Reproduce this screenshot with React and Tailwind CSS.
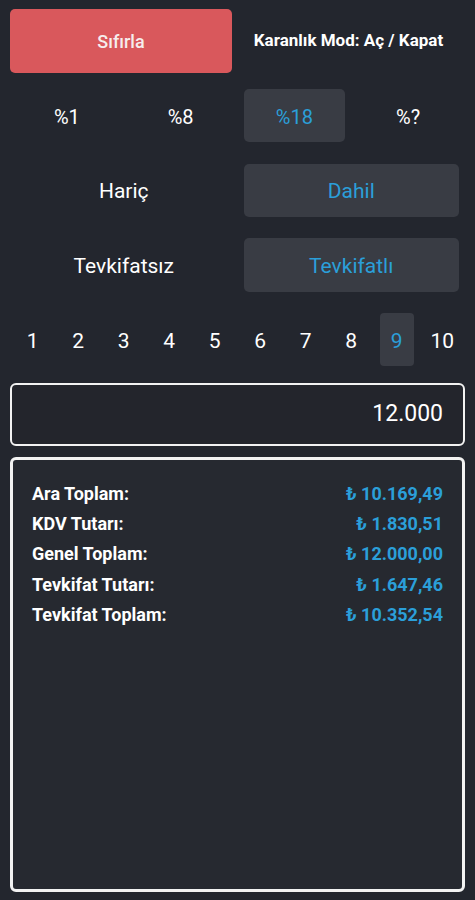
import React from "react";

const font = { fontFamily: "Roboto, 'Noto Sans', sans-serif" };

export default function App() {
  const pct = ["%1", "%8", "%18", "%?"];
  const nums = [1, 2, 3, 4, 5, 6, 7, 8, 9, 10];
  const rows = [
    ["Ara Toplam:", "₺ 10.169,49"],
    ["KDV Tutarı:", "₺ 1.830,51"],
    ["Genel Toplam:", "₺ 12.000,00"],
    ["Tevkifat Tutarı:", "₺ 1.647,46"],
    ["Tevkifat Toplam:", "₺ 10.352,54"],
  ];
  return (
    <div className="w-[475px] h-[900px] bg-[#23262e] text-white px-[10px] pt-[9px] flex flex-col" style={font}>
      <div className="flex h-[64px]">
        <div className="w-[222px] h-[64px] rounded-[5px] bg-[#d9585c] flex items-center justify-center text-[18px] font-medium text-[#f6eded]">
          Sıfırla
        </div>
        <div className="flex-1 flex items-center justify-center text-[17px] font-bold">
          Karanlık Mod: Aç / Kapat
        </div>
      </div>

      <div className="grid grid-cols-4 h-[53px] mt-[16px]">
        {pct.map((p) => (
          <div key={p} className="px-[6px] h-full">
            <div className={`h-full rounded-[5px] flex items-center justify-center pt-[2px] text-[20px] ${p === "%18" ? "bg-[#393c44] text-[#2b9fd9]" : ""}`}>
              {p}
            </div>
          </div>
        ))}
      </div>

      <div className="grid grid-cols-2 h-[53px] mt-[22px]">
        <div className="flex items-center justify-center pt-[3px] text-[21px]">Hariç</div>
        <div className="px-[6px] h-full">
          <div className="h-full rounded-[5px] bg-[#393c44] text-[#2b9fd9] flex items-center justify-center pt-[3px] text-[21px]">Dahil</div>
        </div>
      </div>

      <div className="grid grid-cols-2 h-[54px] mt-[21px]">
        <div className="flex items-center justify-center pt-[3px] text-[21px]">Tevkifatsız</div>
        <div className="px-[6px] h-full">
          <div className="h-full rounded-[5px] bg-[#393c44] text-[#2b9fd9] flex items-center justify-center pt-[3px] text-[21px]">Tevkifatlı</div>
        </div>
      </div>

      <div className="grid grid-cols-10 h-[53px] mt-[21px]">
        {nums.map((n) => (
          <div key={n} className="px-[6px] h-full">
            <div className={`h-full rounded-[4px] flex items-center justify-center pt-[4px] text-[21px] ${n === 9 ? "bg-[#393c44] text-[#2b9fd9]" : ""}`}>
              {n}
            </div>
          </div>
        ))}
      </div>

      <div className="mt-[17px] h-[63px] border-2 border-[#f2f2f2] rounded-[6px] bg-[#23252c] flex items-center justify-end pr-[20px] text-[23px]">
        12.000
      </div>

      <div className="mt-[11px] h-[435px] border-[3px] border-[#f2f2f2] rounded-[6px] bg-[#262930] pt-[18px] px-[19px] flex flex-col">
        {rows.map(([l, v]) => (
          <div key={l} className="flex justify-between items-center h-[30.3px] text-[18px] font-bold">
            <span>{l}</span>
            <span className="text-[#2b9fd9]">{v}</span>
          </div>
        ))}
      </div>
    </div>
  );
}
